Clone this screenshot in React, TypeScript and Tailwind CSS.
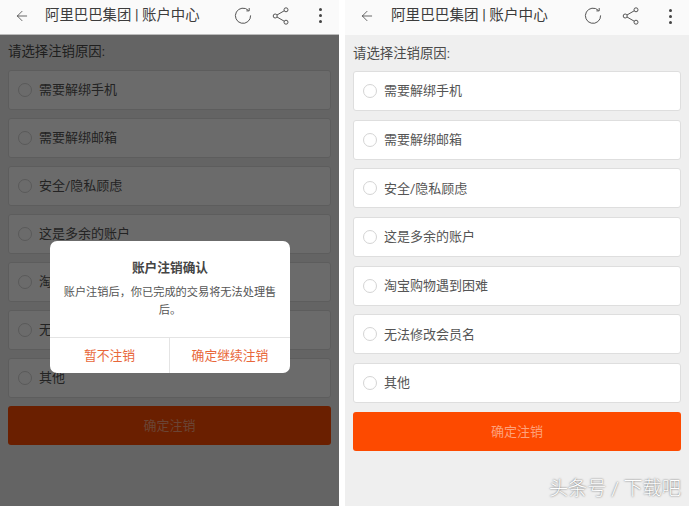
import { ArrowLeft } from 'lucide-react';

const reasons = ['需要解绑手机', '需要解绑邮箱', '安全/隐私顾虑', '这是多余的账户', '淘宝购物遇到困难', '无法修改会员名', '其他'];

const font = "font-['Roboto','Noto_Sans_CJK_SC',sans-serif]";

function HeaderIcons() {
  return (
    <div className="flex items-center text-[#555]">
      {/* refresh */}
      <svg width="20" height="20" viewBox="0 0 20 20" fill="none" stroke="currentColor" strokeWidth="1" className="mr-[19px]">
        <path d="M15.4 4.4 A7.6 7.6 0 1 0 17.6 9.4" />
        <path d="M13.4 4.9 H16.2 V2" />
      </svg>
      {/* share */}
      <svg width="18" height="18" viewBox="0 0 18 18" fill="none" stroke="currentColor" strokeWidth="1" className="mr-[29px]">
        <circle cx="3.2" cy="9" r="2" />
        <circle cx="14" cy="2.8" r="2" />
        <circle cx="14" cy="15.2" r="2" />
        <path d="M5 8 L12.2 3.8 M5 10 L12.2 14.2" />
      </svg>
      {/* more */}
      <div className="flex flex-col gap-[3px]">
        <span className="w-[3px] h-[3px] rounded-full bg-[#444]" />
        <span className="w-[3px] h-[3px] rounded-full bg-[#444]" />
        <span className="w-[3px] h-[3px] rounded-full bg-[#444]" />
      </div>
    </div>
  );
}

function Screen({ gap, label, action, header, title }: { gap: string; label: string; action: string; header: string; title: string }) {
  return (
    <div className={`h-full flex flex-col bg-[#efefef] ${font}`}>
      <div className={`h-[35px] shrink-0 bg-[#fafafa] flex items-center pl-[14px] pr-[17px] pb-[3px] text-[#333] ${header}`}>
        <ArrowLeft size={16} strokeWidth={1.1} />
        <span className={`text-[#3c3c3c] whitespace-nowrap flex-1 ${title}`}>阿里巴巴集团 | 账户中心</span>
        <HeaderIcons />
      </div>
      <div className="px-[8px] flex-1">
        <div className={`text-[13.4px] leading-[17px] text-[#4a4a4a] ${label}`}>请选择注销原因:</div>
        <div className={`flex flex-col ${gap}`}>
          {reasons.map((r) => (
            <div key={r} className="h-[40px] bg-white border border-[#dedede] rounded-[3px] flex items-center pl-[9px]">
              <span className="w-[14px] h-[14px] rounded-full border border-[#d4d4d4] mr-[7px]" />
              <span className="text-[13px] text-[#555]">{r}</span>
            </div>
          ))}
        </div>
        <div className={`h-[39px] bg-[#fd4a00] rounded-[3px] flex items-center justify-center text-[13px] text-[#fea27c] ${action}`}>
          确定注销
        </div>
      </div>
    </div>
  );
}

export default function App() {
  return (
    <div className="w-[693px] h-[506px] bg-white flex overflow-hidden">
      <div className="relative w-[339px] h-full shrink-0">
        <Screen gap="gap-[8px]" label="mt-[8px] mb-[10px]" action="mt-[8px]" header="border-b border-[#bbbbbb]" title="ml-[15px] text-[14.4px]" />
        <div className={`absolute left-0 right-0 top-[35px] bottom-0 bg-black/[.58] ${font}`} />
        <div className={`absolute left-[50px] top-[241px] w-[240px] h-[132px] bg-white rounded-[7px] flex flex-col ${font}`}>
          <div className="flex-1 px-[13px] text-center">
            <div className="mt-[19px] text-[12.7px] leading-[16px] font-bold text-[#444]">账户注销确认</div>
            <div className="mt-[8px] text-[11.2px] leading-[18px] text-[#555]">账户注销后，你已完成的交易将无法处理售后。</div>
          </div>
          <div className="h-[36px] border-t border-[#e4e4e4] flex text-[12.8px] text-[#e8673a]">
            <div className="w-[120px] border-r border-[#e4e4e4] flex items-center justify-center">暂不注销</div>
            <div className="flex-1 flex items-center justify-center">确定继续注销</div>
          </div>
        </div>
      </div>
      <div className="w-[6px] shrink-0" />
      <div className="relative w-[344px] h-full shrink-0">
        <Screen gap="gap-[8.7px]" label="mt-[10px] mb-[9px]" action="mt-[9px]" header="" title="ml-[16px] text-[14.6px]" />
        <div className={`absolute right-[8px] bottom-[6px] text-[19.2px] leading-[22px] font-light text-white [text-shadow:0_0_2px_rgba(0,0,0,0.7)] ${font}`}>
          头条号 / 下载吧
        </div>
      </div>
    </div>
  );
}
